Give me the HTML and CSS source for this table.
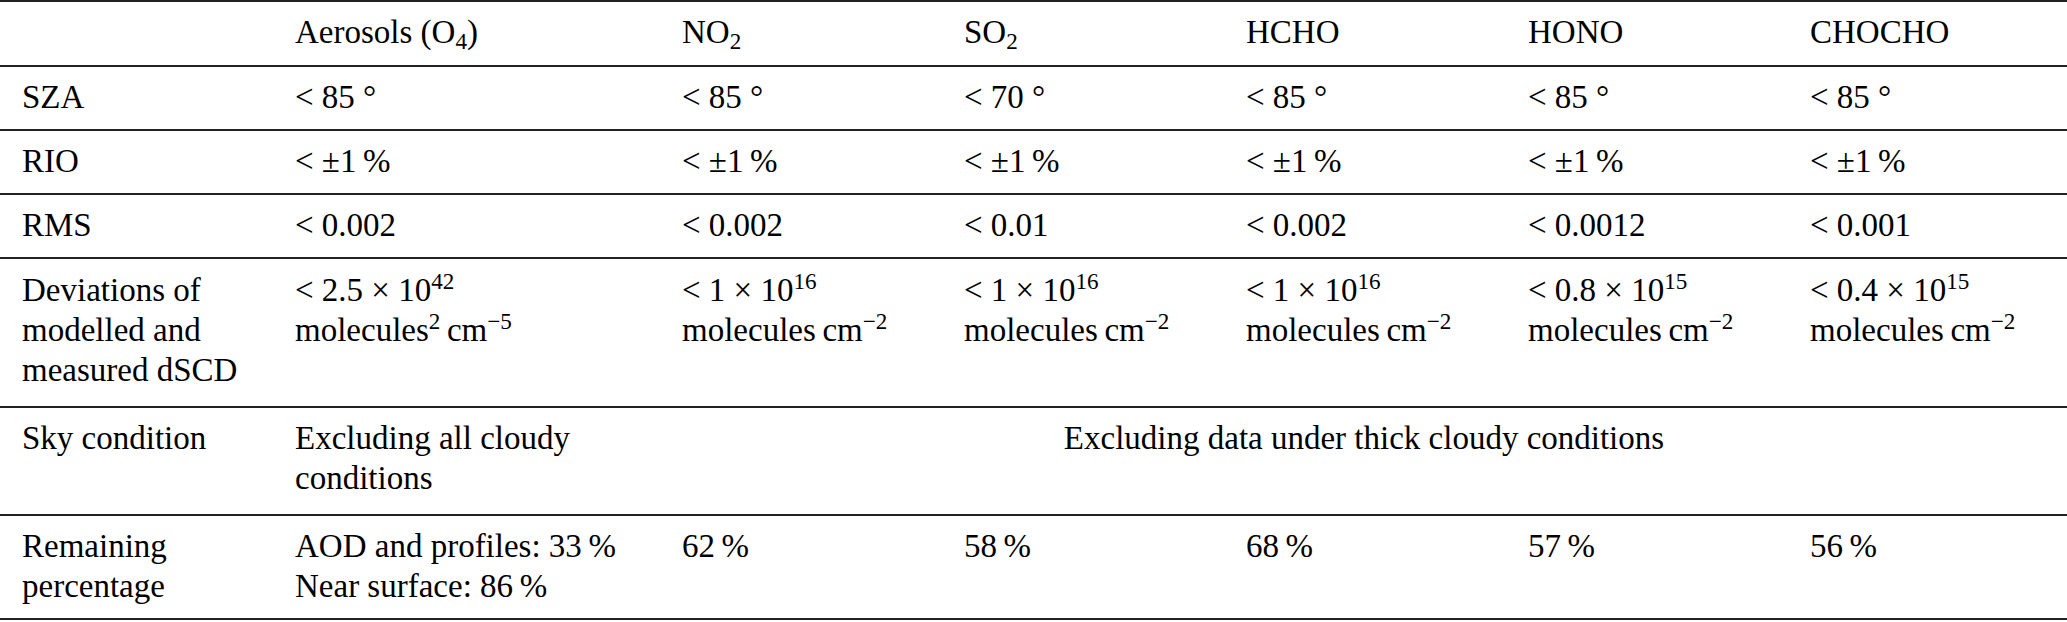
FILE: index.html
```html
<!DOCTYPE html>
<html lang="en">
<head>
    <meta charset="UTF-8">
    <meta name="viewport" content="width=device-width, initial-scale=1.0">
    <title>Filter criteria</title>
    <link rel="stylesheet" href="styles.css">
</head>
<body>
    <table class="criteria">
        <colgroup>
            <col class="col-label">
            <col class="col-aerosol">
            <col class="col-gas">
            <col class="col-gas">
            <col class="col-gas">
            <col class="col-gas">
            <col class="col-last">
        </colgroup>
        <thead>
            <tr>
                <th></th>
                <th>Aerosols (O<sub>4</sub>)</th>
                <th>NO<sub>2</sub></th>
                <th>SO<sub>2</sub></th>
                <th>HCHO</th>
                <th>HONO</th>
                <th>CHOCHO</th>
            </tr>
        </thead>
        <tbody>
            <tr>
                <td>SZA</td>
                <td>&lt; 85 &deg;</td>
                <td>&lt; 85 &deg;</td>
                <td>&lt; 70 &deg;</td>
                <td>&lt; 85 &deg;</td>
                <td>&lt; 85 &deg;</td>
                <td>&lt; 85 &deg;</td>
            </tr>
            <tr>
                <td>RIO</td>
                <td>&lt; &plusmn;1&thinsp;%</td>
                <td>&lt; &plusmn;1&thinsp;%</td>
                <td>&lt; &plusmn;1&thinsp;%</td>
                <td>&lt; &plusmn;1&thinsp;%</td>
                <td>&lt; &plusmn;1&thinsp;%</td>
                <td>&lt; &plusmn;1&thinsp;%</td>
            </tr>
            <tr>
                <td>RMS</td>
                <td>&lt; 0.002</td>
                <td>&lt; 0.002</td>
                <td>&lt; 0.01</td>
                <td>&lt; 0.002</td>
                <td>&lt; 0.0012</td>
                <td>&lt; 0.001</td>
            </tr>
            <tr class="row-dscd">
                <td>Deviations of modelled and measured dSCD</td>
                <td>&lt; 2.5 &times; 10<sup>42</sup><br>molecules<sup>2</sup>&thinsp;cm<sup>&minus;5</sup></td>
                <td>&lt; 1 &times; 10<sup>16</sup><br>molecules&thinsp;cm<sup>&minus;2</sup></td>
                <td>&lt; 1 &times; 10<sup>16</sup><br>molecules&thinsp;cm<sup>&minus;2</sup></td>
                <td>&lt; 1 &times; 10<sup>16</sup><br>molecules&thinsp;cm<sup>&minus;2</sup></td>
                <td>&lt; 0.8 &times; 10<sup>15</sup><br>molecules&thinsp;cm<sup>&minus;2</sup></td>
                <td>&lt; 0.4 &times; 10<sup>15</sup><br>molecules&thinsp;cm<sup>&minus;2</sup></td>
            </tr>
            <tr class="row-sky">
                <td>Sky condition</td>
                <td>Excluding all cloudy conditions</td>
                <td colspan="5" class="span-center">Excluding data under thick cloudy conditions</td>
            </tr>
            <tr class="row-remaining">
                <td>Remaining percentage</td>
                <td>AOD and profiles: 33&thinsp;%<br>Near surface: 86&thinsp;%</td>
                <td>62&thinsp;%</td>
                <td>58&thinsp;%</td>
                <td>68&thinsp;%</td>
                <td>57&thinsp;%</td>
                <td>56&thinsp;%</td>
            </tr>
        </tbody>
    </table>
</body>
</html>
```

FILE: styles.css
```css
body {
    margin: 0;
    padding: 0;
    background-color: white;
    font-family: 'Liberation Serif', 'Times New Roman', serif;
    color: #000;
}

.criteria {
    width: 2067px;
    table-layout: fixed;
    border-collapse: collapse;
    border-top: 2px solid #222;
    font-size: 33px;
    line-height: 40px;
}

.col-label {
    width: 273px;
}

.col-aerosol {
    width: 387px;
}

.col-gas {
    width: 282px;
}

.col-last {
    width: 280px;
}

.criteria th,
.criteria td {
    padding: 10px 22px 12px 22px;
    text-align: left;
    vertical-align: top;
    font-weight: normal;
    border-bottom: 2px solid #222;
}

.criteria th {
    padding-bottom: 13px;
}

.criteria .row-dscd td {
    padding-top: 11px;
    padding-bottom: 16px;
}

.criteria .row-sky td {
    padding-bottom: 16px;
}

.criteria .row-remaining td {
    padding-bottom: 12px;
}

.criteria td.span-center {
    text-align: center;
}

.criteria sub,
.criteria sup {
    font-size: 0.7em;
    line-height: 0;
}

.criteria sub {
    vertical-align: -0.25em;
}

.criteria sup {
    vertical-align: 0.5em;
}
```
